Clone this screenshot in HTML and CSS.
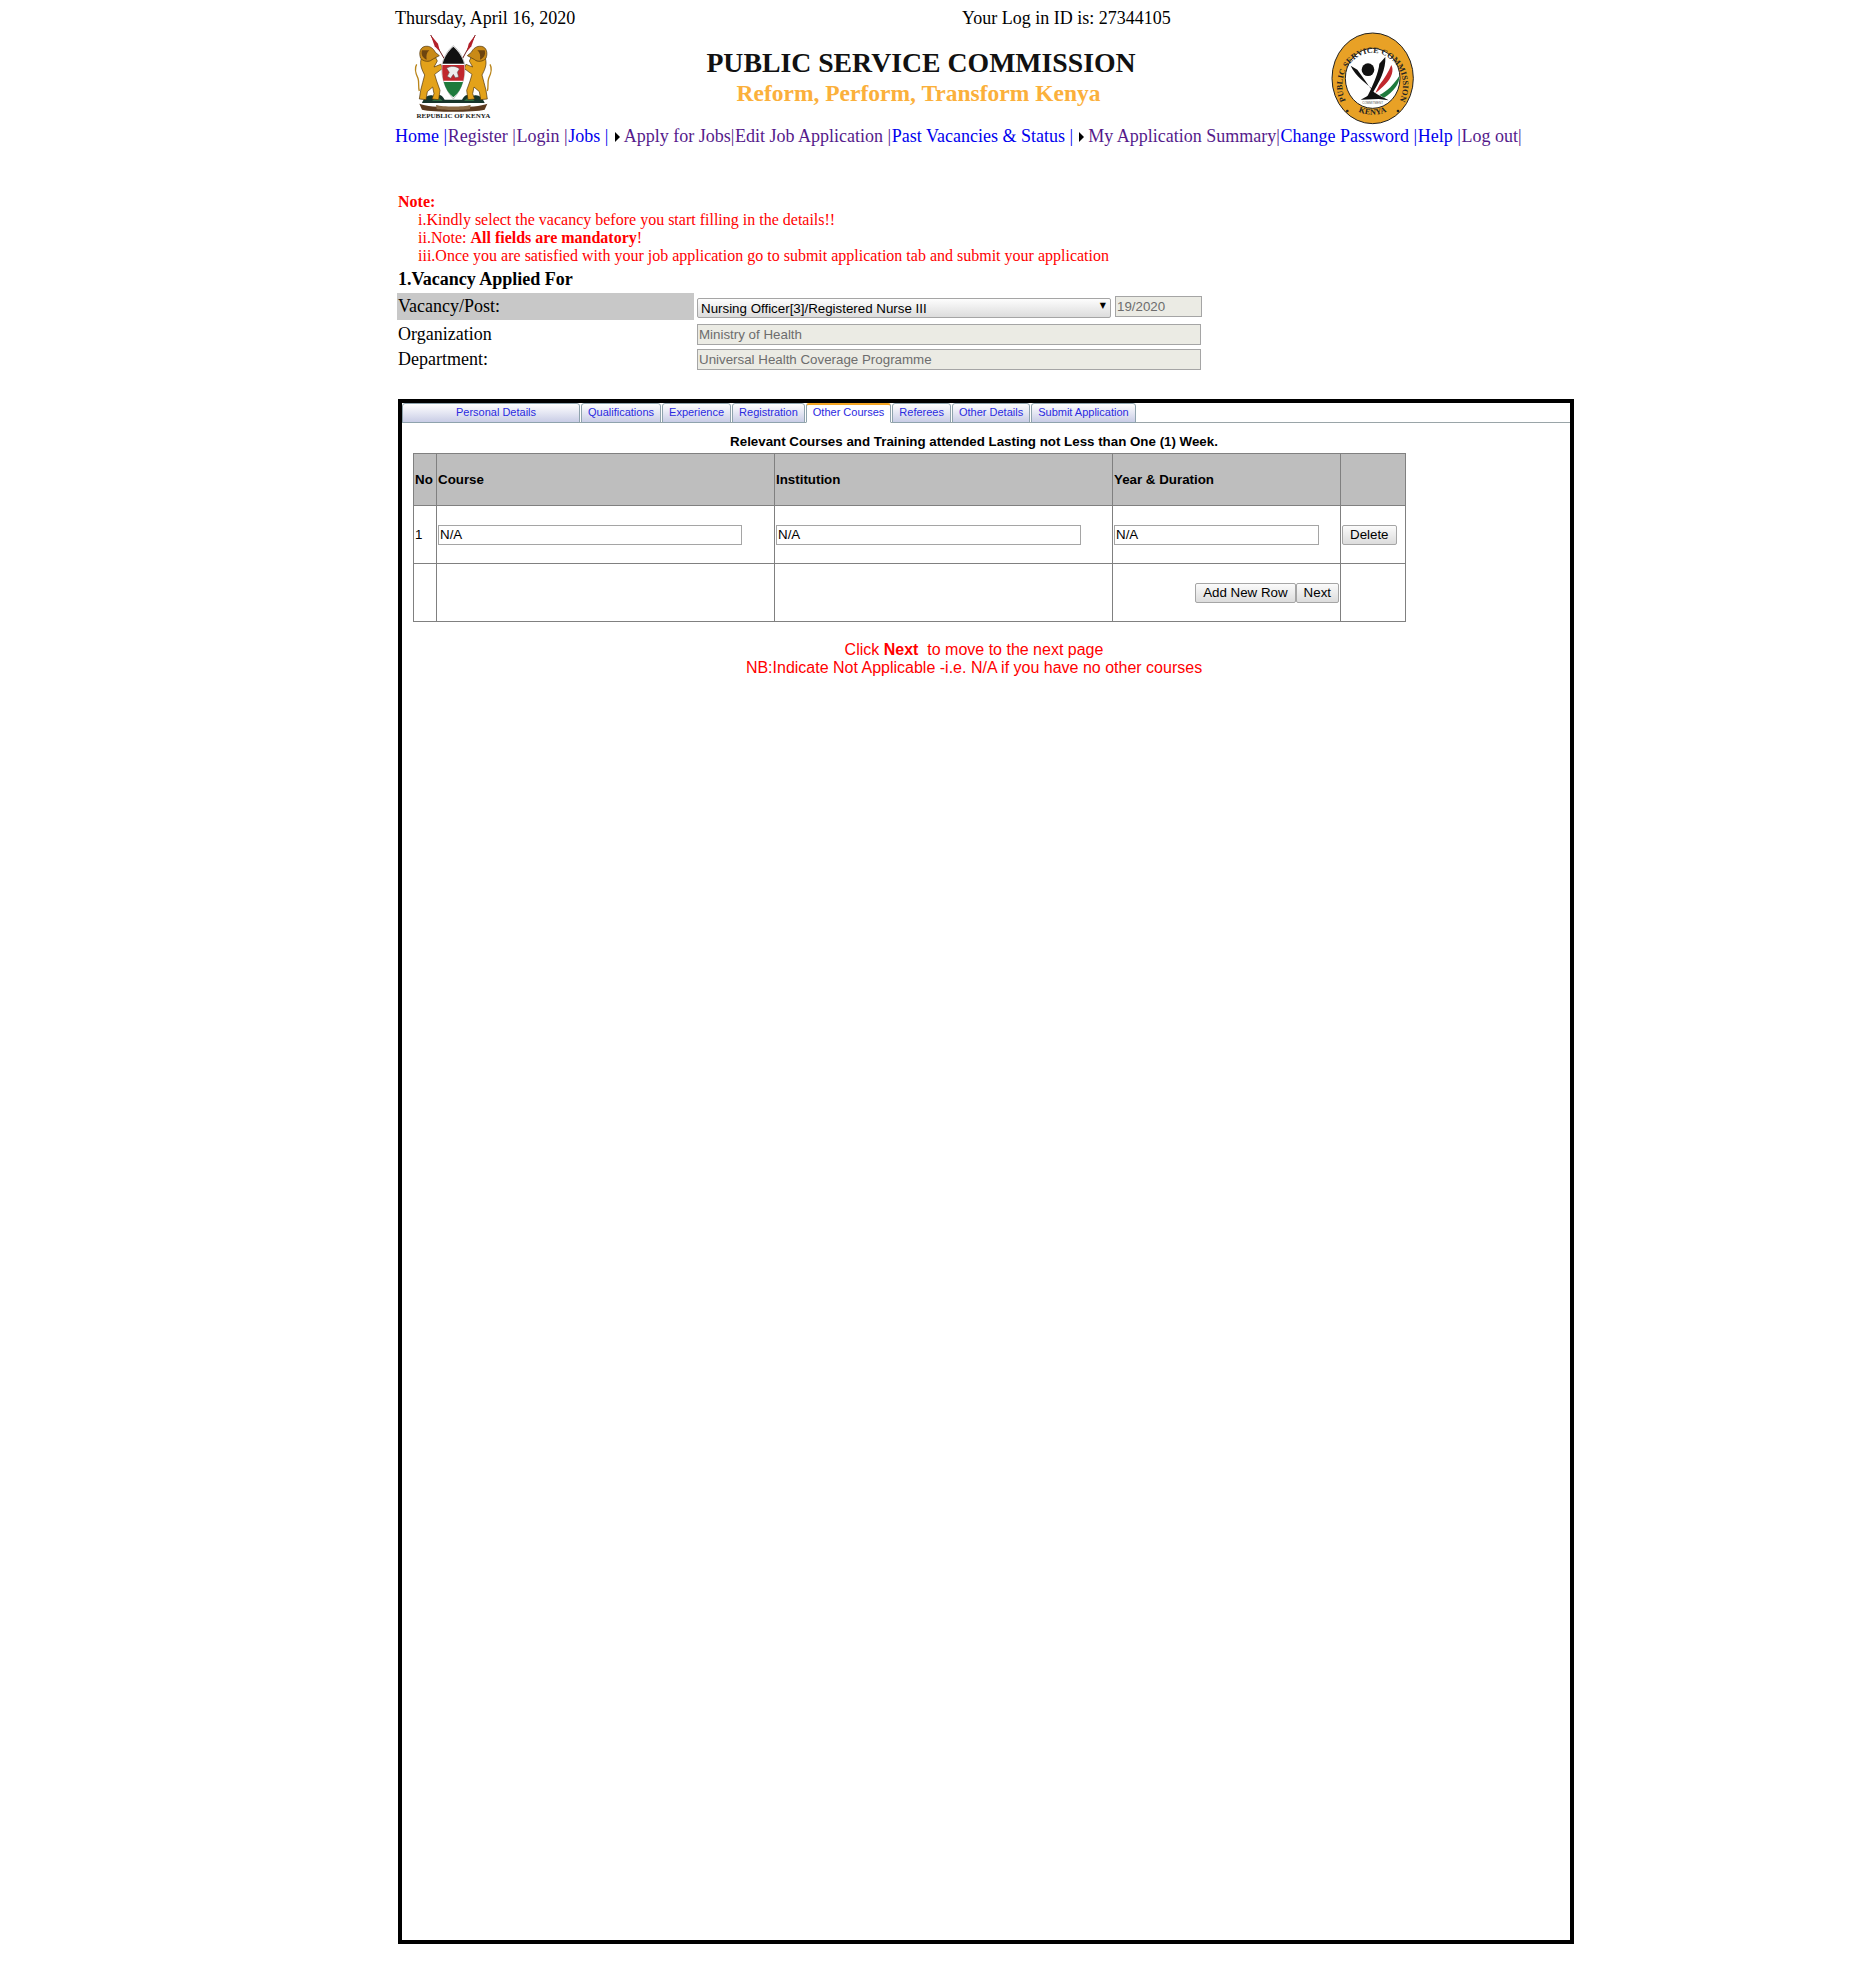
FILE: index.html
```html
<!DOCTYPE html>
<html lang="en">
<head>
  <meta charset="UTF-8" />
  <title>Public Service Commission - Other Courses</title>
  <link rel="stylesheet" href="styles.css">
</head>
<body>

  <div class="top-row">
    <span class="today">Thursday, April 16, 2020</span>
    <span class="login-id">Your Log in ID is: 27344105</span>
  </div>

  <div class="masthead">
    <svg class="logo" viewBox="0 0 330 300" width="110" height="100">
      <!-- spears -->
      <path d="M132 100 L92 30" stroke="#6b1c1c" stroke-width="3"/>
      <path d="M92 30 L114 56 L120 80 L104 64 Z" fill="#b3202a"/>
      <path d="M188 100 L226 30" stroke="#6b1c1c" stroke-width="3"/>
      <path d="M226 30 L206 56 L200 80 L214 64 Z" fill="#b3202a"/>
      <!-- hills behind the legs -->
      <path d="M66 234 C74 212 92 204 106 216 C116 206 126 208 134 224 L186 224 C194 208 204 206 214 216 C228 204 246 212 254 234 Z" fill="#16352a"/>
      <path d="M96 228 L112 214 L128 228 Z M192 228 L208 214 L224 228 Z" fill="#2c6a3f"/>
      <!-- left lion -->
      <path d="M50 118 C42 132 48 148 54 160 C58 172 54 186 58 198" fill="none" stroke="#b9851a" stroke-width="4"/>
      <path d="M64 100 C58 118 66 135 74 150 C70 165 66 180 62 196 L58 222 L78 224 L82 200 L98 186 L102 206 L96 222 L116 224 L120 196 L110 168 L104 148 L128 130 L122 118 L102 126 L112 108 L104 92 Z" fill="#e3a21a" stroke="#4a300a" stroke-width="2"/>
      <path d="M76 64 C60 66 56 84 62 100 C70 110 88 112 96 104 L118 92 L106 82 C100 70 90 62 76 64 Z" fill="#c98a17" stroke="#4a300a" stroke-width="2"/>
      <path d="M66 76 C62 88 68 100 80 104 C78 92 80 82 88 76 Z" fill="#6d4510"/>
      <!-- right lion -->
      <path d="M270 118 C278 132 272 148 266 160 C262 172 266 186 262 198" fill="none" stroke="#b9851a" stroke-width="4"/>
      <path d="M256 100 C262 118 254 135 246 150 C250 165 254 180 258 196 L262 222 L242 224 L238 200 L222 186 L218 206 L224 222 L204 224 L200 196 L210 168 L216 148 L192 130 L198 118 L218 126 L208 108 L216 92 Z" fill="#e3a21a" stroke="#4a300a" stroke-width="2"/>
      <path d="M244 64 C260 66 264 84 258 100 C250 110 232 112 224 104 L202 92 L214 82 C220 70 230 62 244 64 Z" fill="#c98a17" stroke="#4a300a" stroke-width="2"/>
      <path d="M254 76 C258 88 252 100 240 104 C242 92 240 82 232 76 Z" fill="#6d4510"/>
      <!-- shield -->
      <path d="M160 62 C178 76 190 98 195 122 C197 160 182 198 160 222 C138 198 123 160 125 122 C130 98 142 76 160 62 Z" fill="#fff" stroke="#555" stroke-width="1"/>
      <path d="M160 65 C176 78 188 98 192 116 L128 116 C132 98 144 78 160 65 Z" fill="#111"/>
      <path d="M127 120 L193 120 C194 138 193 152 190 167 L130 167 C127 152 126 138 127 120 Z" fill="#c1272d"/>
      <path d="M131 171 L189 171 C184 190 174 206 160 217 C146 206 136 190 131 171 Z" fill="#1e7a3c"/>
      <path d="M140 130 C150 122 170 122 178 132 L172 142 L176 156 L166 158 L160 148 L152 160 L142 154 L148 142 Z" fill="#eee" stroke="#555" stroke-width="1.5"/>
      <!-- motto ribbon -->
      <path d="M58 236 C90 250 230 250 262 236 L254 254 C220 262 100 262 66 254 Z" fill="#5b3a1e"/>
      <path d="M108 240 C130 246 190 246 212 240 L210 252 C190 256 130 256 110 252 Z" fill="#8a6a44"/>
      <text class="logo-name" x="160" y="280" text-anchor="middle">REPUBLIC OF KENYA</text>
    </svg>

    <div class="title-block">
      <div class="title">PUBLIC SERVICE COMMISSION</div>
      <div class="motto">Reform, Perform, Transform Kenya</div>
    </div>

    <svg class="seal" viewBox="0 0 300 300" width="100" height="100">
      <defs>
        <path id="seal-top" d="M70 212 A91 98 0 1 1 234 212"/>
        <path id="seal-bottom" d="M96 240 A104 110 0 0 0 208 240"/>
      </defs>
      <ellipse cx="152" cy="148" rx="122" ry="136" fill="#e8a126" stroke="#222" stroke-width="3"/>
      <ellipse cx="152" cy="148" rx="82" ry="90" fill="#fff" stroke="#222" stroke-width="3"/>
      <text class="seal-text"><textPath href="#seal-top" startOffset="50%" text-anchor="middle">PUBLIC SERVICE COMMISSION</textPath></text>
      <text class="seal-text"><textPath href="#seal-bottom" startOffset="50%" text-anchor="middle">KENYA</textPath></text>
      <circle cx="76" cy="246" r="4" fill="#222"/>
      <circle cx="228" cy="246" r="4" fill="#222"/>
      <!-- figure -->
      <path d="M172 168 C188 148 200 128 208 108 C216 122 210 146 190 166 C180 176 170 186 160 192 Z" fill="#c1272d"/>
      <path d="M172 198 C196 186 216 166 232 140 C234 164 214 188 186 206 Z" fill="#1e7a3c"/>
      <path d="M86 110 L106 122 C122 142 138 170 156 190 C170 200 188 208 200 214 L170 210 L116 212 L146 196 L154 182 C132 162 100 142 86 110 Z" fill="#111"/>
      <path d="M190 84 C192 120 174 158 148 198 L132 210 C152 172 170 130 172 104 Z" fill="#111"/>
      <circle cx="138" cy="122" r="19" fill="#111"/>
      <text class="seal-small" x="152" y="226" text-anchor="middle">COMMITMENT</text>
    </svg>
  </div>

  <div class="main-nav"><a class="fresh" href="#">Home |</a><a class="seen" href="#">Register |</a><a class="seen" href="#">Login |</a><a class="fresh" href="#">Jobs | </a><span class="arrow"></span><a class="seen" href="#">Apply for Jobs|</a><a class="seen" href="#">Edit Job Application |</a><a class="fresh" href="#">Past Vacancies &amp; Status | </a><span class="arrow"></span><a class="seen" href="#">My Application Summary|</a><a class="fresh" href="#">Change Password |</a><a class="fresh" href="#">Help |</a><a class="seen" href="#">Log out|</a></div>

  <div class="notes">
    <strong>Note:</strong>
    <div class="note-line">i.Kindly select the vacancy before you start filling in the details!!</div>
    <div class="note-line">ii.Note: <strong>All fields are mandatory</strong>!</div>
    <div class="note-line">iii.Once you are satisfied with your job application go to submit application tab and submit your application</div>
  </div>

  <div class="vacancy">
    <h2>1.Vacancy Applied For</h2>
    <div class="vacancy-row post-row">
      <label>Vacancy/Post:</label>
      <div class="select-box">
        <select class="post-select">
          <option>Nursing Officer[3]/Registered Nurse III</option>
        </select>
      </div>
      <input class="field ref-field" type="text" value="19/2020" disabled />
    </div>
    <div class="vacancy-row org-row">
      <label>Organization</label>
      <input class="field wide-field" type="text" value="Ministry of Health" disabled />
    </div>
    <div class="vacancy-row dept-row">
      <label>Department:</label>
      <input class="field wide-field" type="text" value="Universal Health Coverage Programme" disabled />
    </div>
  </div>

  <div class="form-box">
    <ul class="tabs">
      <li class="tab-first"><a href="#">Personal Details</a></li>
      <li><a href="#">Qualifications</a></li>
      <li><a href="#">Experience</a></li>
      <li><a href="#">Registration</a></li>
      <li class="tab-on"><a href="#">Other Courses</a></li>
      <li><a href="#">Referees</a></li>
      <li><a href="#">Other Details</a></li>
      <li><a href="#">Submit Application</a></li>
    </ul>

    <h3>Relevant Courses and Training attended Lasting not Less than One (1) Week.</h3>

    <table class="courses">
      <thead>
        <tr>
          <th class="col-no">No</th>
          <th class="col-course">Course</th>
          <th class="col-inst">Institution</th>
          <th class="col-year">Year &amp; Duration</th>
          <th class="col-action"></th>
        </tr>
      </thead>
      <tbody>
        <tr>
          <td>1</td>
          <td><input class="cell-input course-input" type="text" value="N/A" /></td>
          <td><input class="cell-input inst-input" type="text" value="N/A" /></td>
          <td><input class="cell-input year-input" type="text" value="N/A" /></td>
          <td><button class="btn">Delete</button></td>
        </tr>
        <tr>
          <td></td>
          <td></td>
          <td></td>
          <td class="row-buttons"><button class="btn">Add New Row</button><button class="btn">Next</button></td>
          <td></td>
        </tr>
      </tbody>
    </table>

    <div class="hint">
      Click <strong>Next</strong>&nbsp; to move to the next page<br>
      NB:Indicate Not Applicable -i.e. N/A if you have no other courses
    </div>
  </div>

</body>
</html>
```

FILE: styles.css
```css
body {
  font-family: 'Liberation Serif', serif;
  font-size: 18px;
  color: #000;
  background: #fff;
  margin: 0;
  padding: 0 0 23px 395px;
}
.top-row {
  display: flex;
  height: 25px;
  padding-top: 7px;
  box-sizing: border-box;
  line-height: 22px;
}
.today {
  width: 567px;
}
.masthead {
  display: flex;
  align-items: center;
  height: 100px;
  width: 1027px;
}
.logo {
  margin-left: 5px;
  flex: none;
}
.logo-name {
  font-family: 'Liberation Serif', serif;
  font-weight: bold;
  font-size: 21px;
  fill: #222;
}
.title-block {
  flex: 1;
  text-align: center;
  font-family: 'Liberation Serif', serif;
  font-weight: bold;
  padding-left: 5px;
  margin-top: 3px;
}
.title {
  font-size: 27.75px;
  line-height: 32px;
  color: #111;
  padding-left: 5px;
}
.motto {
  font-size: 23.5px;
  line-height: 28px;
  color: #fbb03b;
}
.seal {
  flex: none;
  margin-top: 7px;
}
.seal-text {
  font-family: 'Liberation Serif', serif;
  font-weight: bold;
  font-size: 24.5px;
  letter-spacing: 0.5px;
  fill: #222;
}
.seal-small {
  font-family: 'Liberation Sans', sans-serif;
  font-size: 9px;
  fill: #555;
}
.main-nav {
  line-height: 22px;
  white-space: pre;
}
.main-nav a {
  text-decoration: none;
  margin-right: 0.7px;
}
.main-nav .fresh {
  color: #0000ee;
}
.main-nav .seen {
  color: #551a8b;
}
.arrow {
  display: inline-block;
  border-left: 5px solid #000;
  border-top: 5px solid transparent;
  border-bottom: 5px solid transparent;
  margin: 0 4px 0 1px;
}
.notes {
  margin: 46px 0 3px 3px;
  font-size: 16px;
  line-height: 18px;
  color: #f00;
}
.note-line {
  padding-left: 20px;
}
.vacancy {
  margin-left: 2px;
}
.vacancy h2 {
  font-size: 18px;
  line-height: 22px;
  margin: 0 0 3px 1px;
}
.vacancy-row {
  display: flex;
  align-items: center;
}
.vacancy-row label {
  width: 297px;
  padding-left: 1px;
  box-sizing: border-box;
  flex: none;
  align-self: stretch;
  display: flex;
  align-items: center;
}
.post-row {
  height: 27px;
}
.post-row label {
  width: 297px;
  margin-right: 3px;
  background: #c8c8c8;
}
.org-row {
  height: 25px;
  margin-top: 2px;
}
.org-row label, .dept-row label {
  margin-right: 3px;
}
.dept-row {
  height: 25px;
  margin-top: 0;
}
.field {
  font-family: 'Liberation Sans', sans-serif;
  font-size: 13.33px;
  height: 21px;
  box-sizing: border-box;
  border: 1px solid #a5a5a5;
  background: #ebebe4;
  color: #6d6d6d;
  padding: 0 1px;
  margin: 0;
}
.wide-field {
  width: 504px;
}
.ref-field {
  width: 87px;
  margin-left: 4px;
}
.select-box {
  position: relative;
  width: 414px;
  height: 20px;
}
.select-box::after {
  content: "▼";
  position: absolute;
  right: 5px;
  top: 3px;
  font-family: 'DejaVu Sans', sans-serif;
  font-size: 8px;
  line-height: 12px;
  pointer-events: none;
}
.post-select {
  appearance: none;
  width: 100%;
  height: 100%;
  margin: 0;
  padding: 0 3px;
  font-family: 'Liberation Sans', sans-serif;
  font-size: 13.33px;
  color: #000;
  border: 1px solid #a5a5a5;
  border-radius: 2px;
  background: linear-gradient(#fdfdfd, #dcdcdc);
}
.form-box {
  margin: 27px 0 0 3px;
  width: 1176px;
  height: 1545px;
  box-sizing: border-box;
  border: 4px solid #000;
}
.tabs {
  display: flex;
  list-style: none;
  margin: 0;
  padding: 0;
  height: 20px;
  border-bottom: 1px solid #9aa5a8;
  box-sizing: border-box;
}
.tabs li {
  height: 20px;
  box-sizing: border-box;
  margin-right: 1px;
  padding: 1px 6px 0;
  border: 1px solid #8fa3ad;
  border-radius: 3px 3px 0 0;
  background: linear-gradient(#fff, #c9cde6);
  font-family: 'Liberation Sans', sans-serif;
  font-size: 11px;
  line-height: 15px;
  white-space: nowrap;
}
.tabs a {
  color: #2a2adf;
  text-decoration: none;
}
.tabs .tab-first {
  width: 178px;
  padding-left: 16px;
  text-align: center;
}
.tabs .tab-on {
  background: #fff;
  border-top: 2px solid #f5a623;
  border-bottom: 1px solid #fff;
  padding-top: 0;
}
.form-box h3 {
  font-family: 'Liberation Sans', sans-serif;
  font-size: 13.33px;
  line-height: 15px;
  text-align: center;
  width: 1144px;
  margin: 11px 0 4px;
}
.courses {
  border-collapse: collapse;
  table-layout: fixed;
  width: 992px;
  margin-left: 11px;
  font-family: 'Liberation Sans', sans-serif;
  font-size: 13.33px;
}
.courses th, .courses td {
  border: 1px solid #808080;
  padding: 0 1px;
  text-align: left;
  box-sizing: border-box;
}
.courses th {
  background: #bebebe;
  height: 52px;
}
.courses td {
  height: 58px;
}
.col-no { width: 23px; }
.col-course { width: 338px; }
.col-inst { width: 338px; }
.col-year { width: 228px; }
.col-action { width: 65px; }
.cell-input {
  font-family: 'Liberation Sans', sans-serif;
  font-size: 13.33px;
  height: 20px;
  box-sizing: border-box;
  border: 1px solid #a5a5a5;
  padding: 0 2px 0 1px;
  margin: 0;
  color: #000;
  background: #fff;
  display: block;
}
.course-input { width: 304px; }
.inst-input { width: 305px; }
.year-input { width: 205px; }
.btn {
  font-family: 'Liberation Sans', sans-serif;
  font-size: 13.33px;
  height: 20px;
  padding: 0 7px;
  margin: 0;
  border: 1px solid #a5a5a5;
  border-radius: 2px;
  color: #000;
  background: linear-gradient(#fbfbfb, #dcdcdc);
}
.row-buttons {
  text-align: right !important;
}
.hint {
  margin-top: 19px;
  width: 1144px;
  text-align: center;
  font-family: 'Liberation Sans', sans-serif;
  font-size: 16px;
  line-height: 18px;
  color: #f00;
}
```
